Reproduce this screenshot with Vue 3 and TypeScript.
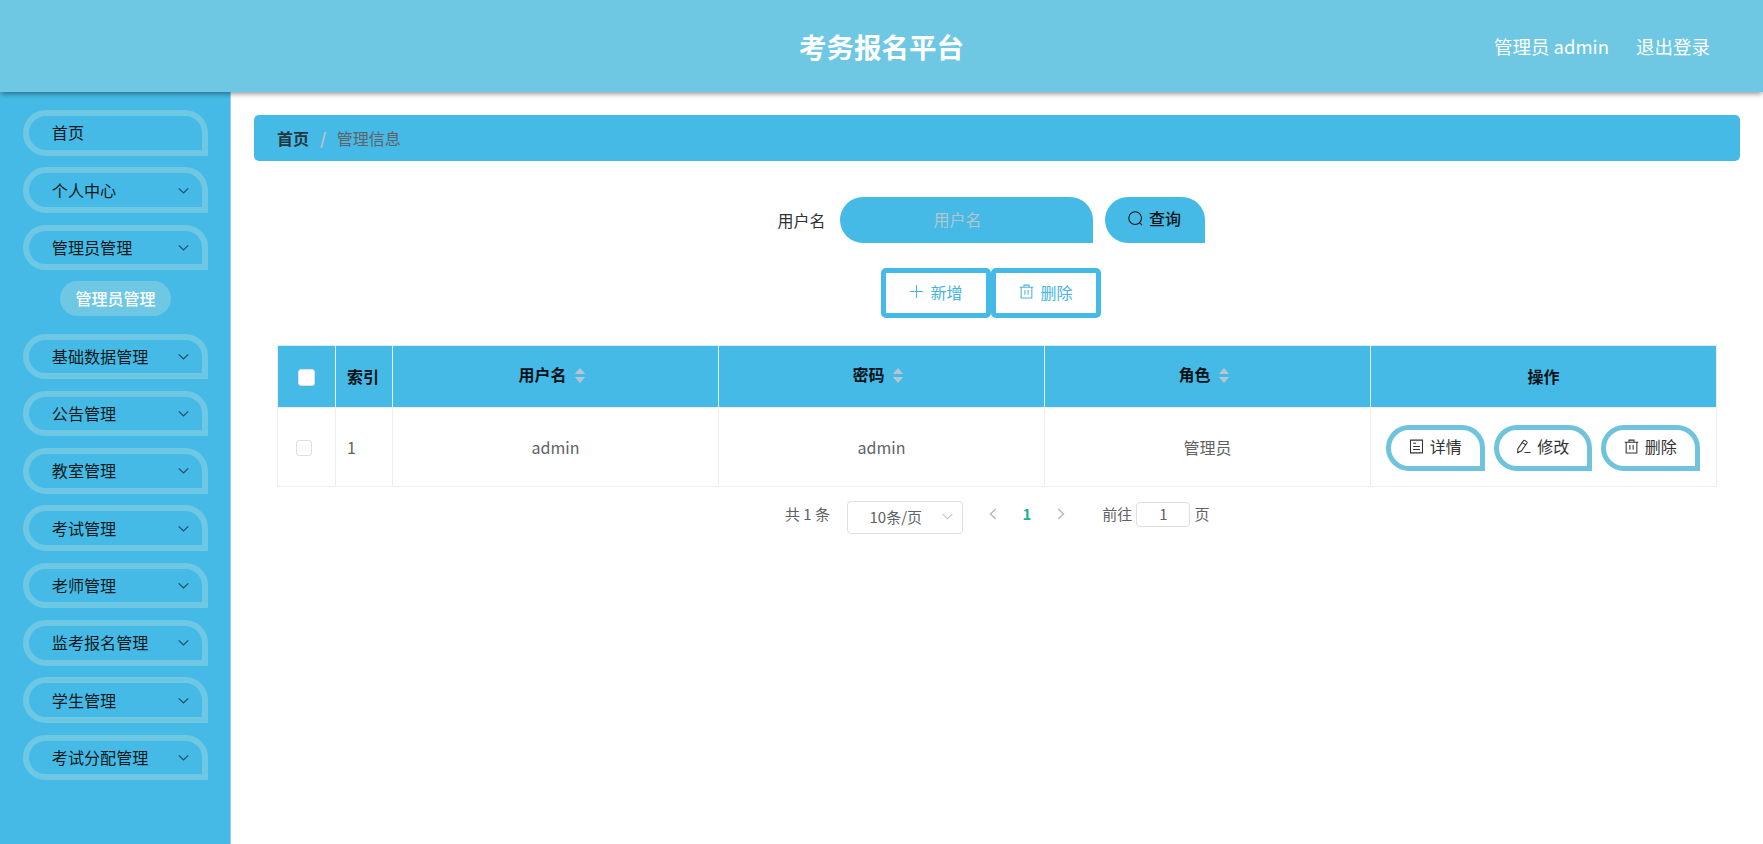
<script setup lang="ts">
interface MenuItem {
  title: string
  children?: string[]
}

const menu: MenuItem[] = [
  { title: '首页' },
  { title: '个人中心', children: [] },
  { title: '管理员管理', children: ['管理员管理'] },
  { title: '基础数据管理', children: [] },
  { title: '公告管理', children: [] },
  { title: '教室管理', children: [] },
  { title: '考试管理', children: [] },
  { title: '老师管理', children: [] },
  { title: '监考报名管理', children: [] },
  { title: '学生管理', children: [] },
  { title: '考试分配管理', children: [] },
]

const columns: string[] = ['用户名', '密码', '角色']
const rows = [{ index: 1, cells: ['admin', 'admin', '管理员'] }]
</script>

<template>
  <div class="page">
    <header class="header">
      <h1 class="title">考务报名平台</h1>
      <nav class="user">
        <span>管理员 admin</span>
        <span>退出登录</span>
      </nav>
    </header>
    <div class="body">
      <aside class="sidebar">
        <div v-for="item in menu" :key="item.title" class="group">
          <div class="menu-item">
            <span>{{ item.title }}</span>
            <svg v-if="item.children" class="chevron" viewBox="0 0 12 12"><path d="M1.6 4 6 8.2 10.4 4" /></svg>
          </div>
          <div v-for="child in item.children ?? []" :key="child" class="sub-item">{{ child }}</div>
        </div>
      </aside>
      <main class="main">
        <div class="breadcrumb">
          <b>首页</b><i>/</i><span>管理信息</span>
        </div>
        <div class="search">
          <label>用户名</label>
          <div class="field">用户名</div>
          <button class="query">
            <svg class="icon" viewBox="0 0 16 16"><circle cx="7.6" cy="7.5" r="6.8" /><path d="m12.2 12.4 2.8 2.8" /></svg>
            <span>查询</span>
          </button>
        </div>
        <div class="tools">
          <button class="tool">
            <svg class="icon" viewBox="0 0 16 16"><path d="M8 1v14M1 8h14" /></svg>
            <span>新增</span>
          </button>
          <button class="tool">
            <svg class="icon" viewBox="0 0 16 16"><path d="M.8 3.500h14.400M5.300 3.300V1.200h5.400v2.100M2.300 3.500v11.500h11.400V3.500M6.300 6.500v5M9.700 6.500v5" /></svg>
            <span>删除</span>
          </button>
        </div>
        <table class="table">
          <colgroup>
            <col class="c-check" /><col class="c-index" /><col v-for="c in columns" :key="c" class="c-data" /><col />
          </colgroup>
          <thead>
            <tr>
              <th><span class="check head-check"></span></th>
              <th class="left"><div class="label">索引</div></th>
              <th v-for="c in columns" :key="c">
                <div class="sortable">
                  <span>{{ c }}</span>
                  <svg class="carets" viewBox="0 0 12 16"><path d="M6 0l5.600 6.400H.4zM6 16L.4 9.600h11.200z" /></svg>
                </div>
              </th>
              <th><div class="label">操作</div></th>
            </tr>
          </thead>
          <tbody>
            <tr v-for="row in rows" :key="row.index">
              <td><span class="check"></span></td>
              <td class="left"><div class="label">{{ row.index }}</div></td>
              <td v-for="(cell, i) in row.cells" :key="i"><div class="label">{{ cell }}</div></td>
              <td>
                <div class="actions">
                  <button class="action">
                    <svg class="icon" viewBox="0 0 16 16"><path d="M1.600 1.200h12.800v13.600H1.600zM4.400 4.600h3.200M4.400 8h7.200M4.400 11.300h7.200" /></svg>
                    <span>详情</span>
                  </button>
                  <button class="action">
                    <svg class="icon" viewBox="0 0 16 16"><path d="M8 1.700 2 10.300l-.2 4.200 3.900-1.700 6-8.500q.4-.7-.2-1.200L9.400 1.500q-.8-.5-1.400.2zM6.600 3.700l3.700 2.600M9 14.500h6.500" /></svg>
                    <span>修改</span>
                  </button>
                  <button class="action">
                    <svg class="icon" viewBox="0 0 16 16"><path d="M.8 3.500h14.400M5.300 3.300V1.200h5.400v2.100M2.300 3.500v11.500h11.400V3.500M6.300 6.500v5M9.700 6.500v5" /></svg>
                    <span>删除</span>
                  </button>
                </div>
              </td>
            </tr>
          </tbody>
        </table>
        <div class="pagination">
          <span class="total">共 1 条</span>
          <div class="size">
            <span>10条/页</span>
            <svg class="size-arrow" viewBox="0 0 12 12"><path d="M1.600 3.800 6 8l4.400-4.200" /></svg>
          </div>
          <svg class="arrow" viewBox="0 0 8 12"><path d="M6.800 1 1.500 6l5.300 5" /></svg>
          <b class="current">1</b>
          <svg class="arrow" viewBox="0 0 8 12"><path d="M1.200 1l5.300 5-5.300 5" /></svg>
          <span class="goto">前往</span>
          <div class="jump">1</div>
          <span>页</span>
        </div>
      </main>
    </div>
  </div>
</template>

<style>
body {
  margin: 0;
  overflow: hidden;
}
</style>

<style scoped>
* {
  box-sizing: border-box;
}
.page {
  height: 844px;
  display: flex;
  flex-direction: column;
  background: #fff;
  font-family: 'Noto Sans CJK SC', 'Noto Sans', sans-serif;
  font-size: 16px;
  color: #606266;
}
button {
  font: inherit;
  padding: 0;
  margin: 0;
  display: flex;
  align-items: center;
  justify-content: center;
  gap: 6px;
}
.icon {
  width: 15px;
  height: 15px;
  fill: none;
  stroke: currentColor;
  stroke-width: 1.1;
  flex: none;
}
.header {
  position: relative;
  z-index: 1;
  flex: none;
  height: 92px;
  display: grid;
  grid-template-columns: 1fr auto 1fr;
  align-items: center;
  background: #6ec8e4;
  color: #fff;
  box-shadow: 0 3px 5px -1px rgba(0, 0, 0, 0.4);
}
.title {
  grid-column: 2;
  margin: 0;
  font-size: 27.5px;
  line-height: 40px;
}
.user {
  justify-self: end;
  display: flex;
  gap: 27px;
  padding: 0 53px 1px 0;
  font-size: 18.5px;
}
.body {
  flex: 1;
  min-height: 0;
  display: flex;
}
.sidebar {
  flex: none;
  width: 231px;
  padding: 18px 23px 0;
  background: #45bae6;
  border-right: 1px solid #8bd0ec;
}
.menu-item {
  width: 185px;
  height: 45.5px;
  margin-bottom: 11.8px;
  padding: 0 12px 0 22.8px;
  display: flex;
  align-items: center;
  justify-content: space-between;
  border: 6px solid #6ec8e4;
  border-radius: 23px 23px 0 23px;
  color: #0c1a20;
  font-size: 16.1px;
  line-height: 24px;
}
.menu-item span {
  padding-bottom: 1px;
}
.chevron {
  width: 13px;
  height: 13px;
  fill: none;
  stroke: #1d5066;
  stroke-width: 1.1;
}
.sub-item {
  width: 111px;
  height: 34.4px;
  margin: -0.5px auto 17.8px 37px;
  text-align: center;
  line-height: 34px;
  border-radius: 18px;
  background: #6ec8e4;
  color: #fff;
  font-weight: 500;
}
.main {
  flex: 1;
  padding: 23px 23px 0;
}
.breadcrumb {
  height: 46.4px;
  padding: 0 23px 1px;
  display: flex;
  align-items: center;
  border-radius: 5px;
  background: #45bae6;
  color: #606266;
}
.breadcrumb b {
  color: #24363f;
}
.breadcrumb i {
  margin: 0 10.5px 0 11px;
  font-style: normal;
  font-weight: 700;
  color: #c0c4cc;
}
.search {
  margin-top: 35.4px;
  padding-right: 12px;
  height: 46px;
  display: flex;
  justify-content: center;
  color: #303133;
}
.search label {
  line-height: 46px;
  padding-right: 14px;
}
.field {
  width: 253px;
  padding-right: 17px;
  text-align: center;
  line-height: 44px;
  border-radius: 23px 23px 0 23px;
  background: #45bae6;
  color: #b4c5d0;
}
.query {
  margin-left: 12px;
  width: 100px;
  padding-bottom: 3px;
  border: 0;
  border-radius: 23px 23px 0 23px;
  background: #45bae6;
  color: #0a1419;
  font-weight: 500;
}
.tools {
  margin-top: 25px;
  padding-right: 12px;
  display: flex;
  justify-content: center;
}
.tool {
  width: 110px;
  height: 50.5px;
  padding-bottom: 3px;
  border: 5px solid #45bae6;
  border-radius: 5px;
  background: #fff;
  color: #45b4de;
}
.table {
  margin: 26.5px 0 0 23px;
  width: 1440px;
  table-layout: fixed;
  border-collapse: separate;
  border-spacing: 0;
  border-top: 1px solid #d5eef8;
  border-left: 1px solid #ebeef5;
}
.c-check {
  width: 58px;
}
.c-index {
  width: 57px;
}
.c-data {
  width: 326px;
}
th,
td {
  padding: 0;
  text-align: center;
  vertical-align: middle;
  border-right: 1px solid #ebeef5;
  border-bottom: 1px solid #ebeef5;
}
th {
  height: 62px;
  background: #45bae6;
  color: #071217;
}
td {
  height: 79.5px;
}
th.left,
td.left {
  text-align: left;
  padding-left: 11px;
}
.label {
  padding-bottom: 1px;
}
.check {
  display: block;
  width: 16px;
  height: 16px;
  margin: 1px 0 0 18px;
  border: 1px solid #dcdfe6;
  border-radius: 3px;
  background: #fff;
}
.head-check {
  width: 17px;
  height: 17px;
  margin: 3px 0 0 20px;
}
.sortable {
  display: flex;
  align-items: center;
  justify-content: center;
  gap: 7px;
  padding: 0 7px 4px 0;
}
.carets {
  width: 12px;
  height: 15px;
  margin-top: 2px;
  fill: #b3c6d2;
}
.actions {
  display: flex;
  gap: 9px;
  padding: 1px 0 0 15px;
}
.action {
  width: 98.5px;
  height: 46px;
  padding-bottom: 3px;
  border: 5px solid #6fc3dd;
  border-radius: 23px 23px 0 23px;
  background: #fff;
  color: #333;
}
.pagination {
  margin: 13px 0 0 531px;
  height: 34px;
  display: flex;
  align-items: flex-start;
  font-size: 15px;
  line-height: 27px;
}
.total {
  width: 61.5px;
}
.size {
  width: 116px;
  height: 33px;
  margin-top: 1px;
  padding: 0 8px 2px 22px;
  display: flex;
  justify-content: space-between;
  align-items: center;
  border: 1px solid #dcdfe6;
  border-radius: 4px;
}
.size-arrow {
  width: 13px;
  height: 13px;
  fill: none;
  stroke: #c0c4cc;
}
.arrow {
  width: 8px;
  height: 12px;
  margin: 8px 0 0 26px;
  fill: none;
  stroke: #b5b9c0;
  stroke-width: 1.5;
}
.current {
  margin-left: 26px;
  color: #1ab394;
}
.goto {
  margin-left: 37px;
}
.jump {
  width: 54px;
  height: 25px;
  margin: 2px 4px 0 4px;
  text-align: center;
  line-height: 22px;
  border: 1px solid #dcdfe6;
  border-radius: 4px;
}
</style>
